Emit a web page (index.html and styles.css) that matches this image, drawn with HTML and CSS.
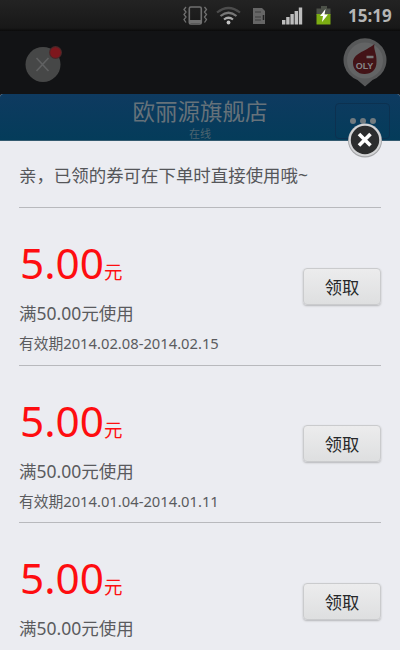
FILE: index.html
```html
<!DOCTYPE html>
<html lang="zh-CN">
<head>
<meta charset="utf-8">
<title>欧丽源旗舰店</title>
<link rel="stylesheet" href="styles.css">
</head>
<body>
<div class="screen">
  <div class="status">
    <svg class="status-icons" width="150" height="32" viewBox="0 0 150 32">
      <g fill="none" stroke="#707070" stroke-width="1.600">
        <rect x="8.300" y="7" width="12" height="17" rx="1.500"/>
        <path d="M9 21.500h11" stroke-width="3"/>
        <path d="M5 7l-2 2.500 2 2.500-2 2.500 2 2.500-2 2.500 2 3M23.500 7l2 2.500-2 2.500 2 2.500-2 2.500 2 2.500-2 3" stroke-width="1.300"/>
      </g>
      <g fill="none" stroke-width="2.200">
        <path d="M36 12.500q11.500-9 23 0" stroke="#4c4c4c"/>
        <path d="M39.500 16q8-6.500 16 0" stroke="#777"/>
        <path d="M43 19.500q4.500-3.500 9 0" stroke="#aaa"/>
      </g>
      <circle cx="47.500" cy="22.500" r="1.900" fill="#c4c4c4"/>
      <path d="M72 8h9l3 3v13H72z" fill="#666"/>
      <path d="M74 12h6M74 17h6M74 20h6" stroke="#3c3c3c"/>
      <path d="M82.500 15v5" stroke="#222" stroke-width="1.500"/>
      <g fill="#bdbdbd"><path d="M101 20h3.400v4.500H101zM105.200 17h3.400v7.500h-3.400zM109.400 14h3.400v10.500h-3.400zM113.600 11h3.400v13.500h-3.400zM117.800 7.500h3.400v17h-3.400z"/></g>
      <path d="M140 6h6v2.500h3.500V15h-14V8.500h4.500z" fill="#4c5148"/>
      <path d="M135.500 14h14v10.500h-14z" fill="#7cad13"/>
      <path d="M144.500 9l-5.500 7h3l-1 6 6-7.500h-3.500z" fill="#fff"/>
    </svg>
    <span class="clock">15:19</span>
  </div>
  <div class="nav">
    <svg width="40" height="40" viewBox="0 0 40 40">
      <circle cx="20" cy="19.500" r="17.500" fill="#464747"/>
      <path d="M13.500 13l12 13M25.500 13l-12 13" stroke="#606162" stroke-width="1.600"/>
      <circle cx="32.500" cy="7.500" r="6.500" fill="#4a2829"/>
      <circle cx="32.500" cy="7.500" r="5.300" fill="#7e171d"/>
    </svg>
    <svg width="46" height="50" viewBox="0 0 46 50">
      <path d="M23 48.500l-7.500-6.500A21.500 21.500 0 1 1 30.500 42z" fill="#575859"/>
      <circle cx="23" cy="22.500" r="18" fill="#636465"/>
      <path d="M32.500 6C31 11 35 15 34.500 24c0 8-5 12-12 12S11 31 11 25C11 15 23 14 32.500 6z" fill="#431317"/>
      <path d="M24.500 19h7" stroke="#777" stroke-width="2.500"/>
      <text class="logo-text" x="22.500" y="30.500">OLY</text>
    </svg>
  </div>
  <div class="shop">
    <div class="shop-name">欧丽源旗舰店</div>
    <div class="shop-state">在线</div>
    <div class="more"><i></i><i></i><i></i></div>
  </div>
  <div class="panel">
    <svg class="close" width="36" height="36" viewBox="0 0 36 36">
      <circle cx="18" cy="18.500" r="17" fill="#a4a5a8"/>
      <circle cx="18" cy="18" r="16.200" fill="#d3d4d6"/>
      <circle cx="18" cy="18" r="14.200" fill="#2c2d2e"/>
      <path d="M12 12l11.500 11.500M23.500 12L12 23.500" stroke="#fff" stroke-width="3.600"/>
    </svg>
    <div class="hint">亲，已领的券可在下单时直接使用哦~</div>
    <div class="coupon">
      <div class="info">
        <div class="price">5.00<span class="unit">元</span></div>
        <div class="rule">满50.00元使用</div>
        <div class="date">有效期2014.02.08-2014.02.15</div>
      </div>
      <button class="take">领取</button>
    </div>
    <div class="coupon">
      <div class="info">
        <div class="price">5.00<span class="unit">元</span></div>
        <div class="rule">满50.00元使用</div>
        <div class="date">有效期2014.01.04-2014.01.11</div>
      </div>
      <button class="take">领取</button>
    </div>
    <div class="coupon">
      <div class="info">
        <div class="price">5.00<span class="unit">元</span></div>
        <div class="rule">满50.00元使用</div>
      </div>
      <button class="take">领取</button>
    </div>
  </div>
</div>
</body>
</html>
```
FILE: styles.css
```css
* { box-sizing: border-box; }
body {
  margin: 0;
  font-family: "Noto Sans", "Noto Sans CJK SC", sans-serif;
}
.screen {
  width: 400px;
  height: 650px;
  overflow: hidden;
  display: flex;
  flex-direction: column;
  background: #ebecf1;
}
.status {
  flex: none;
  height: 31px;
  display: flex;
  justify-content: flex-end;
  background: linear-gradient(#232323, #181818 90%, #0a0a0a);
}
.status-icons { margin-right: 17px; }
.clock {
  width: 52px;
  font-size: 17px;
  font-weight: 700;
  line-height: 32px;
  color: #b5b5b5;
}
.nav {
  flex: none;
  height: 63px;
  padding: 7px 12px 0 23px;
  display: flex;
  justify-content: space-between;
  background: #121315;
}
.nav svg:first-child { margin-top: 7px; }
.logo-text {
  font: 700 9px "Liberation Sans", sans-serif;
  fill: #858687;
  text-anchor: middle;
}
.shop {
  flex: none;
  position: relative;
  height: 47px;
  text-align: center;
  background: linear-gradient(#0e3a60, #043c5a);
  border-radius: 3px 3px 0 0;
  box-shadow: 0 -3px 0 #121315;
  border-bottom: 1px solid #335a70;
}
.shop-name {
  padding-top: 4px;
  font-size: 22.500px;
  line-height: 28px;
  color: #66727a;
}
.shop-state {
  padding-top: 2px;
  font-size: 11px;
  line-height: 11px;
  color: #4c6470;
}
.more {
  position: absolute;
  right: 10px;
  top: 9px;
  width: 55px;
  height: 36px;
  display: flex;
  justify-content: center;
  gap: 4px;
  padding-top: 14px;
  border: 1px solid #0c3150;
  border-radius: 4px;
}
.more i {
  width: 6px;
  height: 6px;
  border-radius: 50%;
  background: #727b80;
}
.panel {
  flex: 1;
  position: relative;
  padding: 0 19px;
  background: #ebecf1;
}
.close {
  position: absolute;
  left: 347px;
  top: -19px;
}
.hint {
  height: 67px;
  font-size: 17.450px;
  line-height: 69px;
  color: #555659;
  border-bottom: 1px solid #b8b9bd;
  white-space: nowrap;
}
.coupon {
  display: flex;
  justify-content: space-between;
  height: 157.500px;
  padding-top: 29px;
  border-bottom: 1px solid #b8b9bd;
}
.price {
  height: 60px;
  padding-left: 1px;
  font-size: 42.300px;
  line-height: 52px;
  color: #fe0d10;
}
.unit { font-size: 18.500px; }
.rule {
  height: 32px;
  font-size: 17.500px;
  line-height: 32px;
  color: #5a5b5e;
}
.date {
  font-size: 14.750px;
  line-height: 29px;
  color: #5a5b5e;
}
.take {
  width: 78px;
  height: 37px;
  margin-top: 30.500px;
  padding: 0;
  border: 1px solid #cacbcd;
  border-radius: 4px;
  background: linear-gradient(#ececed, #dedfe0);
  box-shadow: 0 1px 2px #b5b6b9;
  font: 400 17.300px/33px "Noto Sans CJK SC", sans-serif;
  color: #27282a;
}
```
